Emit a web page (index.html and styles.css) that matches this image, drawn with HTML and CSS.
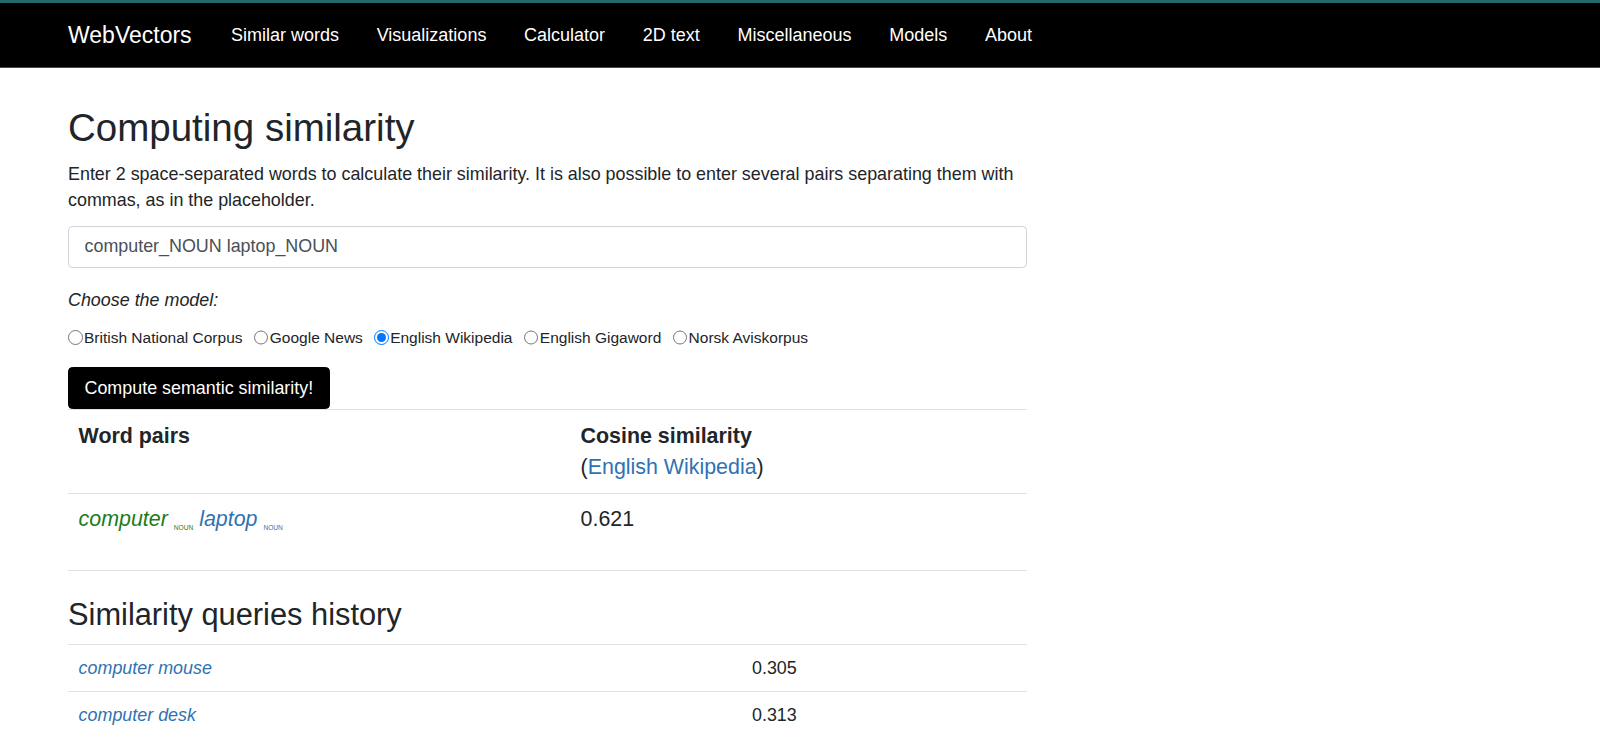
FILE: index.html
```html
<!DOCTYPE html>
<html lang="en">
<head>
<meta charset="utf-8">
<title>WebVectors: Computing similarity</title>
<link rel="stylesheet" href="styles.css">
</head>
<body>
<nav class="navbar">
  <a class="brand" href="#">WebVectors</a>
  <ul class="nav-links">
    <li><a href="#">Similar words</a></li>
    <li><a href="#">Visualizations</a></li>
    <li><a href="#">Calculator</a></li>
    <li><a href="#">2D text</a></li>
    <li><a href="#">Miscellaneous</a></li>
    <li><a href="#">Models</a></li>
    <li><a href="#">About</a></li>
  </ul>
</nav>
<main class="main">
  <h1 class="title">Computing similarity</h1>
  <p class="intro">Enter 2 space-separated words to calculate their similarity. It is also possible to enter several pairs separating them with commas, as in the placeholder.</p>
  <form class="query-form">
    <input class="text-input" type="text" value="computer_NOUN laptop_NOUN">
    <p class="choose">Choose the model:</p>
    <div class="radios">
      <label class="radio"><input type="radio" name="model">British National Corpus</label>
      <label class="radio"><input type="radio" name="model">Google News</label>
      <label class="radio"><input type="radio" name="model" checked>English Wikipedia</label>
      <label class="radio"><input type="radio" name="model">English Gigaword</label>
      <label class="radio"><input type="radio" name="model">Norsk Aviskorpus</label>
    </div>
    <button class="btn" type="button">Compute semantic similarity!</button>
  </form>
  <table class="results">
    <thead>
      <tr>
        <th class="col-pairs">Word pairs</th>
        <th>Cosine similarity<br><span class="paren">(<a href="#">English Wikipedia</a>)</span></th>
      </tr>
    </thead>
    <tbody>
      <tr>
        <td class="pair"><span class="w1">computer<sub class="pos">NOUN</sub></span> <a href="#" class="w2">laptop<sub class="pos">NOUN</sub></a></td>
        <td>0.621</td>
      </tr>
    </tbody>
  </table>
  <h3 class="history-title">Similarity queries history</h3>
  <table class="history">
    <tr>
      <td class="col-query"><a href="#">computer mouse</a></td>
      <td>0.305</td>
    </tr>
    <tr>
      <td class="col-query"><a href="#">computer desk</a></td>
      <td>0.313</td>
    </tr>
  </table>
</main>
</body>
</html>
```
FILE: styles.css
```css
* { box-sizing: border-box; }

html, body {
  margin: 0;
  padding: 0;
  background: #fff;
}

body {
  font-family: "Liberation Sans", Arial, sans-serif;
  font-size: 17.9px;
  line-height: 26.4px;
  color: #212529;
}

a { color: #2f72b3; text-decoration: none; }

/* Navbar */
.navbar {
  display: flex;
  align-items: center;
  height: 68px;
  background: #000;
  border-top: 3px solid #246a6b;
  border-bottom: 1px solid #3c4b5d;
  padding-left: 68px;
  padding-top: 1px;
}

.brand {
  color: #fff;
  font-size: 23px;
  margin-right: 20.5px;
}

.nav-links {
  display: flex;
  list-style: none;
  margin: 0;
  padding: 0;
}

.nav-links a {
  color: #fff;
  font-size: 18px;
  display: block;
  padding: 0 18.85px;
}

/* Main */
.main {
  width: 1027px;
  padding-left: 68px;
}

.title {
  font-size: 38.5px;
  font-weight: 400;
  line-height: 46px;
  margin: 36.5px 0 10px;
  color: #212529;
}

.intro {
  margin: 0 0 12px;
  line-height: 26.5px;
}

.query-form { margin: 0; }

.text-input {
  display: block;
  width: 100%;
  height: 42.5px;
  border: 1px solid #ced4da;
  border-radius: 4.4px;
  padding: 0 15.5px;
  font-family: inherit;
  font-size: 17.9px;
  color: #495057;
  background: #fff;
}

.choose {
  font-style: italic;
  margin: 18.8px 0 0;
}

.radios {
  display: flex;
  align-items: center;
  margin-top: 13px;
  height: 23px;
  font-size: 15.5px;
  color: #212529;
}

.radio {
  display: flex;
  align-items: center;
  margin-right: 11.3px;
}

.radio input {
  width: 14.5px;
  height: 14.5px;
  margin: 0 1.5px 0 0;
}

.btn {
  display: block;
  margin-top: 17.7px;
  height: 42.5px;
  padding: 0 15.5px;
  background: #000;
  color: #fff;
  border: 1px solid #000;
  border-radius: 4.4px;
  font-family: inherit;
  font-size: 17.9px;
}

/* Results table */
.results {
  width: 959px;
  border-collapse: collapse;
  font-size: 21.4px;
  line-height: 30.6px;
  border-bottom: 1px solid #dee2e6;
}

.results th,
.results td {
  text-align: left;
  vertical-align: top;
  border-top: 1px solid #dee2e6;
  padding: 10.8px 10.6px 10.3px;
}

.results th { font-weight: 700; }

.results .paren { font-weight: 400; }

.col-pairs { width: 502px; }

.results td { padding-bottom: 34.5px; }

.pair { font-style: italic; }

.w1 { color: #1b7c1b; }
.w2 { color: #2f72b3; }

.pos {
  font-size: 6.6px;
  line-height: 0;
  vertical-align: -4px;
  margin-left: 6px;
  margin-right: 0;
  font-style: normal;
}

/* History */
.history-title {
  font-size: 30.8px;
  font-weight: 400;
  line-height: 37px;
  margin: 25.4px 0 11px;
}

.history {
  width: 959px;
  border-collapse: collapse;
}

.history td {
  border-top: 1px solid #dee2e6;
  padding: 9.8px 10.6px 9.7px;
  text-align: left;
}

.col-query { width: 673.4px; font-style: italic; }
```
